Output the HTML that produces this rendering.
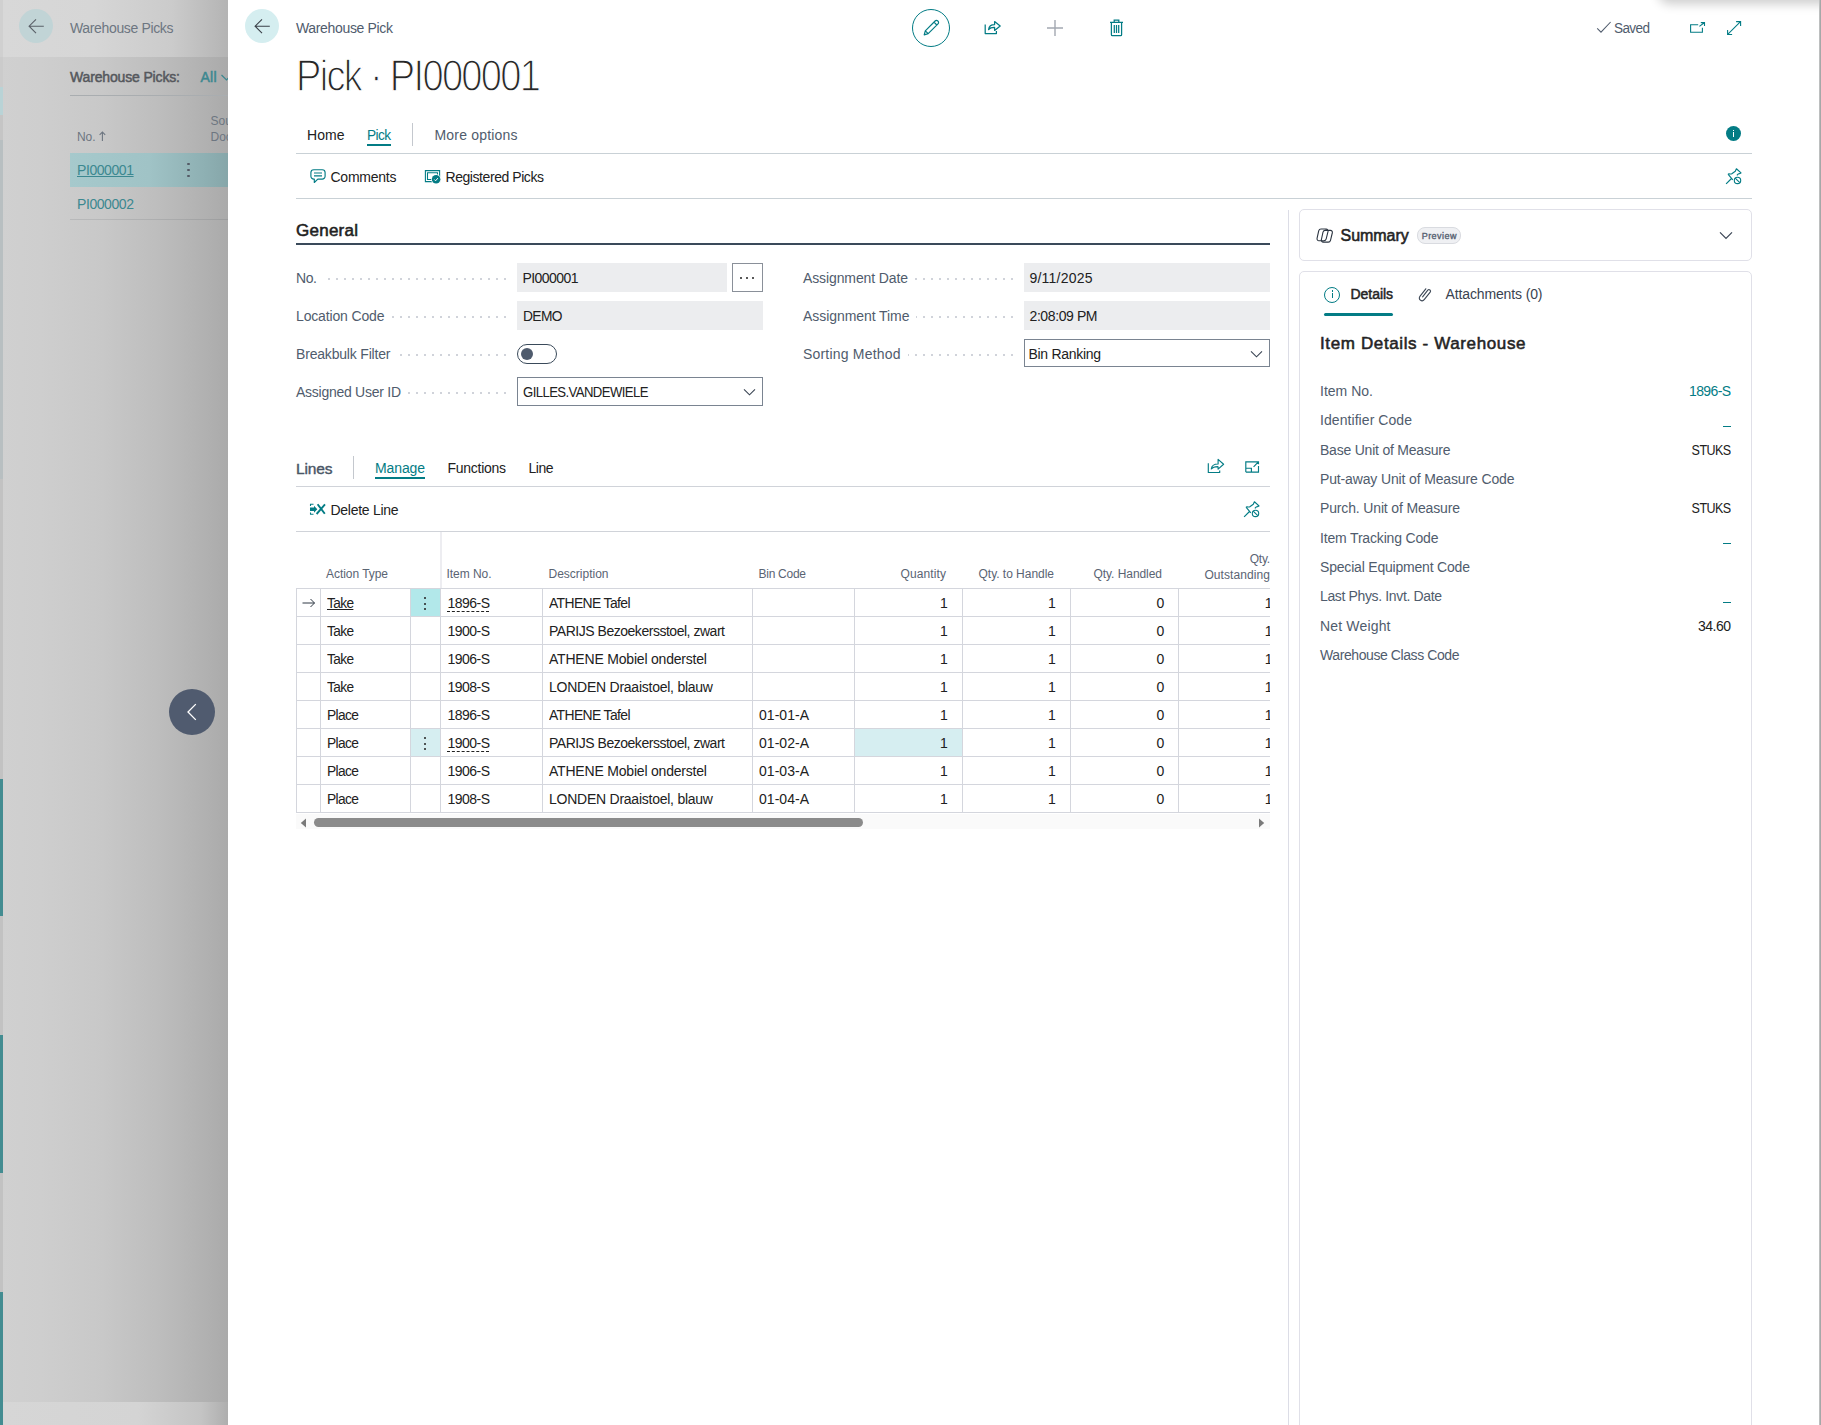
<!DOCTYPE html>
<html lang="en"><head><meta charset="utf-8"><title>Pick - PI000001 - Warehouse Pick</title>
<style>
html,body{margin:0;padding:0}
body{position:relative;width:1821px;height:1425px;overflow:hidden;background:#fff;font-family:"Liberation Sans", sans-serif;font-size:14px;color:#212121}
body div,body svg,.t{position:absolute;box-sizing:content-box}
.t{white-space:nowrap}
svg{overflow:visible}
.title{font-weight:400;-webkit-text-stroke:1.3px #fff}
</style></head>
<body>
<!-- dimmed Warehouse Picks list page behind the card -->
<div style="left:0px;top:0px;width:228px;height:1425px;background:linear-gradient(90deg,#d0d0d0 0%,#cecece 18%,#c8c8c8 45%,#bdbdbd 70%,#b1b1b1 90%,#aaaaaa 100%)"></div>
<div style="left:3px;top:0px;width:225px;height:57px;background:linear-gradient(90deg,#d8d8d8 0%,#d6d6d6 40%,#cbcbcb 75%,#b4b4b4 100%)"></div>
<div style="left:3px;top:1402px;width:225px;height:23px;background:linear-gradient(90deg,#d6d6d6 0%,#d4d4d4 60%,#c4c4c4 88%,#aeaeae 100%)"></div>
<div style="left:0px;top:0px;width:2.7px;height:57px;background:#d0d0d0"></div>
<div style="left:0px;top:57px;width:2.7px;height:30px;background:#cbcbcb"></div>
<div style="left:0px;top:87px;width:2.7px;height:28px;background:#b9d3d6"></div>
<div style="left:0px;top:115px;width:2.7px;height:25px;background:#c5c5c5"></div>
<div style="left:0px;top:140px;width:2.7px;height:339px;background:#b8bfc1"></div>
<div style="left:0px;top:479px;width:2.7px;height:300px;background:#c2c2c2"></div>
<div style="left:0px;top:779px;width:2.7px;height:137px;background:#438c91"></div>
<div style="left:0px;top:916px;width:2.7px;height:119px;background:#c2c2c2"></div>
<div style="left:0px;top:1035px;width:2.7px;height:138px;background:#438c91"></div>
<div style="left:0px;top:1173px;width:2.7px;height:119px;background:#c2c2c2"></div>
<div style="left:0px;top:1292px;width:2.7px;height:133px;background:#438c91"></div>
<div style="left:19px;top:9px;width:34px;height:34px;border-radius:50%;background:#c1d4d6"></div>
<svg style="left:27px;top:17px" width="18" height="18" viewBox="0 0 18 18" fill="none" ><path d="M16.800 9.200H2.200 M9 2.300L2.100 9.200l6.900 6.900" stroke="#5a6068" stroke-width="1.100"/></svg>
<span class="t" style="top:14px;font-size:14px;line-height:28px;left:70px;color:#6d7681;letter-spacing:-0.352px;">Warehouse Picks</span>
<span class="t" style="top:63px;font-size:14px;line-height:28px;left:70px;color:#55585d;letter-spacing:-0.154px;-webkit-text-stroke:0.5px #55585d;">Warehouse Picks:</span>
<span class="t" style="top:63px;font-size:14px;line-height:28px;left:200.5px;color:#3c8890;letter-spacing:0.219px;-webkit-text-stroke:0.5px #3c8890;">All</span>
<svg style="left:220px;top:71px" width="8" height="12" viewBox="0 0 8 12" fill="none" ><path d="M1.5 4l5 5 5-5" stroke="#3c8890" stroke-width="1.2"/></svg>
<div style="left:70px;top:95px;width:158px;height:1px;background:#a9adb0"></div>
<span class="t" style="top:124.5px;font-size:12px;line-height:24px;left:77px;color:#6d7681;letter-spacing:-0.094px;">No.</span>
<svg style="left:99px;top:131px" width="7" height="10" viewBox="0 0 7 10" fill="none" ><path d="M3.400 10V1 M.600 3.800L3.400 1l2.800 2.800" stroke="#6d7681" stroke-width="1.100"/></svg>
<div style="left:210.5px;top:113px;width:17.5px;height:34px;overflow:hidden"><span class="t" style="left:0;top:0;font-size:12px;line-height:16px;color:#6d7681">Sou</span><span class="t" style="left:0;top:16px;font-size:12px;line-height:16px;color:#6d7681">Doc</span></div>
<div style="left:70px;top:152.5px;width:158px;height:34px;background:linear-gradient(90deg,#a6c9cc 0%,#a0c3c6 50%,#8eb0b3 85%,#86a6a9 100%)"></div>
<span class="t" style="top:156px;font-size:14px;line-height:28px;left:77px;color:#3c8890;letter-spacing:-0.422px;text-decoration:underline;">PI000001</span>
<div style="left:187.2px;top:162.8px;width:2.7px;height:2.7px;border-radius:35%;background:#545b66"></div>
<div style="left:187.2px;top:168.6px;width:2.7px;height:2.7px;border-radius:35%;background:#545b66"></div>
<div style="left:187.2px;top:174.8px;width:2.7px;height:2.7px;border-radius:35%;background:#545b66"></div>
<span class="t" style="top:190px;font-size:14px;line-height:28px;left:77px;color:#3c8890;letter-spacing:-0.422px;">PI000002</span>
<div style="left:70px;top:219px;width:158px;height:1px;background:rgba(60,70,80,.13)"></div>
<div style="left:169px;top:689px;width:46px;height:46px;border-radius:50%;background:#505b6f"></div>
<svg style="left:184px;top:702px" width="16" height="20" viewBox="0 0 16 20" fill="none" ><path d="M11.800 2.100L4 10l7.800 7.900" stroke="#fff" stroke-width="1.350"/></svg>
<!-- Warehouse Pick card -->
<div style="left:228px;top:0px;width:1593px;height:1425px;background:#fff"></div>
<div style="left:1658px;top:-30px;width:200px;height:30px;border-radius:12px;box-shadow:0 4px 11px rgba(0,0,0,.2)"></div>
<div style="left:1819px;top:0px;width:2px;height:1425px;background:linear-gradient(90deg,#c8caca,#9a9d9d)"></div>
<div style="left:245px;top:9px;width:34px;height:34px;border-radius:50%;background:#d5eef0"></div>
<svg style="left:253px;top:17px" width="18" height="18" viewBox="0 0 18 18" fill="none" ><path d="M16.800 9.200H2.200 M9 2.300L2.100 9.200l6.900 6.900" stroke="#3a4048" stroke-width="1.100"/></svg>
<span class="t" style="top:14.4px;font-size:14px;line-height:28px;left:296px;color:#505c6d;letter-spacing:-0.340px;">Warehouse Pick</span>
<span class="t title" style="top:32.5px;font-size:43.5px;line-height:87px;left:296px;color:#262626;transform:scaleX(0.8760);transform-origin:left center;letter-spacing:-1.958px;">Pick · PI000001</span>
<div style="left:912px;top:9px;width:36px;height:36px;border-radius:50%;border:1.3px solid #037c85"></div>
<svg style="left:921px;top:18px" width="20" height="20" viewBox="0 0 20 20" fill="none" ><path d="M3.2 16.8l1.1-4L14.1 3a1.9 1.9 0 0 1 2.7 0l.2.2a1.9 1.9 0 0 1 0 2.7L7.2 15.7z M4.3 12.8l2.9 2.9 M13 4.2l2.8 2.8" stroke="#037c85" stroke-width="1.2" stroke-linejoin="round"/></svg>
<svg style="left:984px;top:19px" width="18" height="16" viewBox="0 0 18 16" fill="none" ><path d="M1.2 5.5V14.5H12.4V12 M4.6 10.5C5 7.2 7.3 5.6 10.6 5.6V2.6L16.2 7l-5.6 4.4V8.4C8 8.3 6 8.8 4.6 10.5z" stroke="#037c85" stroke-width="1.25" stroke-linejoin="round"/></svg>
<svg style="left:1046px;top:19px" width="18" height="18" viewBox="0 0 18 18" fill="none" ><path d="M9 1v16M1 9h16" stroke="#a3a8b1" stroke-width="1.4"/></svg>
<svg style="left:1109px;top:19px" width="15" height="18" viewBox="0 0 15 18" fill="none" ><path d="M1 3.3h13 M5.2 3.2V1.2h4.6v2 M2.4 3.4v12.3a1 1 0 0 0 1 1h8.2a1 1 0 0 0 1-1V3.4 M5.3 6v8 M7.5 6v8 M9.7 6v8" stroke="#037c85" stroke-width="1.25"/></svg>
<svg style="left:1596px;top:20px" width="16" height="14" viewBox="0 0 16 14" fill="none" ><path d="M1.200 8.400L5 12.200 14.600 2" stroke="#505c6d" stroke-width="1.050"/></svg>
<span class="t" style="top:14px;font-size:14px;line-height:28px;left:1613.5px;color:#505c6d;transform:scaleX(0.9682);transform-origin:left center;letter-spacing:-0.630px;">Saved</span>
<svg style="left:1689px;top:21px" width="17" height="13" viewBox="0 0 17 13" fill="none" ><path d="M9.200 3.700H1.600V11.300H13.400V6.800 M10.400 5.400L15.300 1.800 M11.800 1.600H15.500V4.900" stroke="#037c85" stroke-width="1.100"/></svg>
<svg style="left:1726px;top:20px" width="16" height="16" viewBox="0 0 16 16" fill="none" ><path d="M1.700 14.400L14.500 1.700 M10.100 1.600H14.600V6.100 M1.600 9.900V14.500H6.100" stroke="#037c85" stroke-width="1.100"/></svg>
<span class="t" style="top:121px;font-size:14px;line-height:28px;left:307px;letter-spacing:0.047px;">Home</span>
<span class="t" style="top:121px;font-size:14px;line-height:28px;left:367px;color:#037c85;transform:scaleX(0.9771);transform-origin:left center;letter-spacing:-0.630px;">Pick</span>
<div style="left:367px;top:143.5px;width:24px;height:2px;background:#037c85"></div>
<div style="left:412px;top:123px;width:1px;height:23px;background:#c4c8ce"></div>
<span class="t" style="top:121px;font-size:14px;line-height:28px;left:434.5px;color:#505c6d;letter-spacing:0.188px;">More options</span>
<div style="left:1726px;top:126px;width:15px;height:15px;border-radius:50%;background:#037c85"></div>
<div style="left:1733px;top:129.5px;width:1.4px;height:1.6px;background:#fff"></div>
<div style="left:1733px;top:132.2px;width:1.4px;height:5.2px;background:#fff"></div>
<div style="left:296px;top:153px;width:1456px;height:1px;background:#c9d1d6"></div>
<svg style="left:310px;top:169px" width="16" height="16" viewBox="0 0 16 16" fill="none" ><path d="M3.800 .700h8.400a2.900 2.900 0 0 1 2.900 2.900v3.600a2.900 2.900 0 0 1-2.900 2.900H7.800L4.300 13.500V10.100H3.800A2.900 2.900 0 0 1 .900 7.200V3.600A2.900 2.900 0 0 1 3.800 .700z M4 4h8 M4 6.800h8" stroke="#037c85" stroke-width="1.150" stroke-linejoin="round"/></svg>
<span class="t" style="top:163px;font-size:14px;line-height:28px;left:330.5px;letter-spacing:-0.241px;">Comments</span>
<svg style="left:424px;top:169px" width="17" height="16" viewBox="0 0 17 16" fill="none" ><path d="M1.400 1.600H15.600V12.600H1.400z M3.500 3.700H13.500V10.500H3.500z" stroke="#037c85" stroke-width="1.100"/><circle cx="12.100" cy="10.300" r="5" fill="#fff"/><circle cx="12.100" cy="10.300" r="4.300" fill="#037c85"/><path d="M10.300 10.500l1.300 1.300 2.300-2.700" stroke="#fff" stroke-width="1"/></svg>
<span class="t" style="top:163px;font-size:14px;line-height:28px;left:445.5px;letter-spacing:-0.436px;">Registered Picks</span>
<svg style="left:1725px;top:168px" width="18" height="17" viewBox="0 0 18 17" fill="none" ><path d="M1.100 15.900L6.500 10.500 M3 6.100L7.800 11.800 M3 6.100C4.400 5.600 5.800 6.300 6.800 5.800L10.300 3.200L11.400 .800L16 4.900L14.400 5.600C13.400 5.600 12.600 6.400 11.900 7.300" stroke="#037c85" stroke-width="1.150" stroke-linejoin="round"/><circle cx="12.500" cy="12.400" r="3.200" stroke="#037c85" stroke-width="1.100"/><path d="M10.200 10.100l4.600 4.600" stroke="#037c85" stroke-width="1.100"/></svg>
<div style="left:296px;top:198px;width:1456px;height:1px;background:#c9d1d6"></div>
<!-- General -->
<span class="t" style="top:214px;font-size:17px;line-height:34px;left:296px;letter-spacing:0.253px;-webkit-text-stroke:0.55px #212121;">General</span>
<div style="left:296px;top:243px;width:974px;height:2px;background:#3a4a5a"></div>
<span class="t" style="top:264px;font-size:14px;line-height:28px;left:296px;color:#505c6d;letter-spacing:-0.398px;">No.</span>
<div style="left:324px;top:278px;width:182px;height:2px;background:linear-gradient(90deg,#d0d3da 2px,transparent 2px) 4px 0/8px 2px repeat-x"></div>
<div style="left:517px;top:263px;width:210px;height:29px;background:#ecedef"></div><span class="t" style="top:264px;font-size:14px;line-height:28px;left:522.5px;letter-spacing:-0.565px;">PI000001</span>
<div style="left:732px;top:263px;width:29px;height:27px;border:1px solid #8a9099;background:#fff"></div>
<div style="left:739.8px;top:277px;width:2px;height:2px;background:#212121;border-radius:50%"></div>
<div style="left:746px;top:277px;width:2px;height:2px;background:#212121;border-radius:50%"></div>
<div style="left:752.2px;top:277px;width:2px;height:2px;background:#212121;border-radius:50%"></div>
<span class="t" style="top:302px;font-size:14px;line-height:28px;left:296px;color:#505c6d;letter-spacing:-0.150px;">Location Code</span>
<div style="left:392px;top:316px;width:114px;height:2px;background:linear-gradient(90deg,#d0d3da 2px,transparent 2px) 0px 0/8px 2px repeat-x"></div>
<div style="left:517px;top:301px;width:246px;height:29px;background:#ecedef"></div><span class="t" style="top:302px;font-size:14px;line-height:28px;left:522.5px;transform:scaleX(0.9848);transform-origin:left center;letter-spacing:-0.630px;">DEMO</span>
<span class="t" style="top:340px;font-size:14px;line-height:28px;left:296px;color:#505c6d;letter-spacing:-0.184px;">Breakbulk Filter</span>
<div style="left:398px;top:354px;width:108px;height:2px;background:linear-gradient(90deg,#d0d3da 2px,transparent 2px) 2px 0/8px 2px repeat-x"></div>
<div style="left:517px;top:344px;width:38px;height:18px;border:1px solid #3a4a5a;border-radius:10px;background:#fff"></div>
<div style="left:521px;top:348px;width:12px;height:12px;border-radius:50%;background:#4f5b6d"></div>
<span class="t" style="top:378px;font-size:14px;line-height:28px;left:296px;color:#505c6d;letter-spacing:-0.263px;">Assigned User ID</span>
<div style="left:408px;top:392px;width:98px;height:2px;background:linear-gradient(90deg,#d0d3da 2px,transparent 2px) 0px 0/8px 2px repeat-x"></div>
<div style="left:517px;top:377px;width:244px;height:27px;border:1px solid #7a8491;background:#fff"></div>
<span class="t" style="top:378px;font-size:14px;line-height:28px;left:522.5px;transform:scaleX(0.9393);transform-origin:left center;letter-spacing:-0.630px;">GILLES.VANDEWIELE</span>
<svg style="left:742.5px;top:388px" width="13" height="8" viewBox="0 0 13 8" fill="none" ><path d="M1 1.300l5.500 5.500 5.500-5.500" stroke="#3a4554" stroke-width="1.100"/></svg>
<span class="t" style="top:264px;font-size:14px;line-height:28px;left:803px;color:#505c6d;letter-spacing:-0.115px;">Assignment Date</span>
<div style="left:915px;top:278px;width:98px;height:2px;background:linear-gradient(90deg,#d0d3da 2px,transparent 2px) 0px 0/8px 2px repeat-x"></div>
<div style="left:1024px;top:263px;width:246px;height:29px;background:#ecedef"></div><span class="t" style="top:264px;font-size:14px;line-height:28px;left:1029.5px;letter-spacing:0.219px;">9/11/2025</span>
<span class="t" style="top:302px;font-size:14px;line-height:28px;left:803px;color:#505c6d;letter-spacing:-0.062px;">Assignment Time</span>
<div style="left:916px;top:316px;width:97px;height:2px;background:linear-gradient(90deg,#d0d3da 2px,transparent 2px) 7px 0/8px 2px repeat-x"></div>
<div style="left:1024px;top:301px;width:246px;height:29px;background:#ecedef"></div><span class="t" style="top:302px;font-size:14px;line-height:28px;left:1029.5px;letter-spacing:-0.401px;">2:08:09 PM</span>
<span class="t" style="top:340px;font-size:14px;line-height:28px;left:803px;color:#505c6d;letter-spacing:0.196px;">Sorting Method</span>
<div style="left:908px;top:354px;width:105px;height:2px;background:linear-gradient(90deg,#d0d3da 2px,transparent 2px) 7px 0/8px 2px repeat-x"></div>
<div style="left:1024px;top:339px;width:244px;height:26px;border:1px solid #7a8491;background:#fff"></div>
<span class="t" style="top:340px;font-size:14px;line-height:28px;left:1028.5px;letter-spacing:-0.300px;">Bin Ranking</span>
<svg style="left:1250px;top:350px" width="13" height="8" viewBox="0 0 13 8" fill="none" ><path d="M1 1.300l5.500 5.500 5.500-5.500" stroke="#3a4554" stroke-width="1.100"/></svg>
<!-- Lines -->
<span class="t" style="top:452.5px;font-size:15.5px;line-height:31px;left:296px;color:#4a5666;letter-spacing:-0.141px;-webkit-text-stroke:0.400px #4a5666;">Lines</span>
<div style="left:353px;top:456px;width:1px;height:23px;background:#c4c8ce"></div>
<span class="t" style="top:454px;font-size:14px;line-height:28px;left:375px;color:#037c85;letter-spacing:-0.119px;">Manage</span>
<div style="left:375px;top:476.5px;width:50px;height:2px;background:#037c85"></div>
<span class="t" style="top:454px;font-size:14px;line-height:28px;left:447.5px;letter-spacing:-0.275px;">Functions</span>
<span class="t" style="top:454px;font-size:14px;line-height:28px;left:528.5px;letter-spacing:-0.490px;">Line</span>
<svg style="left:1207px;top:458px" width="18" height="16" viewBox="0 0 18 16" fill="none" ><path d="M1.300 5.200V14.500H12.700V12.400 M4.300 11C4.700 7.600 7 6 11.100 6V1.400L16.600 6.300 11.100 11.100V8.700C8 8.600 5.800 9.200 4.300 11z" stroke="#037c85" stroke-width="1.150" stroke-linejoin="round"/></svg>
<svg style="left:1244px;top:459px" width="17" height="15" viewBox="0 0 17 15" fill="none" ><path d="M1.800 13.100V2.800H14.500V5.300 M14.500 7V13.100H1.800 M9.600 7.800L14.100 3.200 M1.800 9.200H7.400V13.100" stroke="#037c85" stroke-width="1.150"/></svg>
<div style="left:296px;top:486px;width:974px;height:1px;background:#d0d3d9"></div>
<svg style="left:309px;top:502px" width="17" height="15" viewBox="0 0 17 15" fill="none" ><path d="M1 2.300H4.500 M1 12.300H4.500 M1.500 2.300V4 M1.500 10.600V12.300" stroke="#037c85" stroke-width="1.100"/><path d="M1 5.600H5V3.800L8.300 7.300 5 10.800V9H1z" fill="#037c85"/><path d="M8.600 2.200l7.200 9.600 M16 2.400l-8.400 9.600" stroke="#037c85" stroke-width="1.900"/></svg>
<span class="t" style="top:496px;font-size:14px;line-height:28px;left:330.5px;letter-spacing:-0.283px;">Delete Line</span>
<svg style="left:1243.2px;top:501.3px" width="18" height="17" viewBox="0 0 18 17" fill="none" ><path d="M1.100 15.900L6.500 10.500 M3 6.100L7.800 11.800 M3 6.100C4.400 5.600 5.800 6.300 6.800 5.800L10.300 3.200L11.400 .800L16 4.900L14.400 5.600C13.400 5.600 12.600 6.400 11.900 7.300" stroke="#037c85" stroke-width="1.150" stroke-linejoin="round"/><circle cx="12.500" cy="12.400" r="3.200" stroke="#037c85" stroke-width="1.100"/><path d="M10.200 10.100l4.600 4.600" stroke="#037c85" stroke-width="1.100"/></svg>
<div style="left:296px;top:531px;width:974px;height:1px;background:#d0d3d9"></div>
<div style="left:440px;top:532px;width:1.5px;height:56px;background:#ededf1"></div>
<span class="t" style="top:561.5px;font-size:12px;line-height:24px;left:326px;color:#5a6473;letter-spacing:-0.048px;">Action Type</span>
<span class="t" style="top:561.5px;font-size:12px;line-height:24px;left:446.5px;color:#5a6473;letter-spacing:-0.051px;">Item No.</span>
<span class="t" style="top:561.5px;font-size:12px;line-height:24px;left:548.5px;color:#5a6473;letter-spacing:-0.003px;">Description</span>
<span class="t" style="top:561.5px;font-size:12px;line-height:24px;left:758.5px;color:#5a6473;letter-spacing:-0.268px;">Bin Code</span>
<span class="t" style="top:561.5px;font-size:12px;line-height:24px;right:874.886px;color:#5a6473;letter-spacing:0.114px;">Quantity</span>
<span class="t" style="top:561.5px;font-size:12px;line-height:24px;right:767.025px;color:#5a6473;letter-spacing:-0.025px;">Qty. to Handle</span>
<span class="t" style="top:561.5px;font-size:12px;line-height:24px;right:659.06px;color:#5a6473;letter-spacing:-0.060px;">Qty. Handled</span>
<div style="left:1179px;top:545px;width:91px;height:40px;overflow:hidden"><span class="t" style="right:0;top:6px;font-size:12px;line-height:16px;color:#5a6473;letter-spacing:-0.200px">Qty.</span><span class="t" style="right:0;top:21.500px;font-size:12px;line-height:16px;color:#5a6473;letter-spacing:0.080px">Outstanding</span></div>
<div style="left:411px;top:589px;width:29px;height:27px;background:#b2e8ea"></div>
<div style="left:411px;top:729px;width:29px;height:27px;background:#d6eef1"></div>
<div style="left:855px;top:729px;width:107px;height:27px;background:#d6eef1"></div>
<div style="left:296px;top:588px;width:974px;height:1px;background:#d4d6dd"></div>
<div style="left:296px;top:616px;width:974px;height:1px;background:#d4d6dd"></div>
<div style="left:296px;top:644px;width:974px;height:1px;background:#d4d6dd"></div>
<div style="left:296px;top:672px;width:974px;height:1px;background:#d4d6dd"></div>
<div style="left:296px;top:700px;width:974px;height:1px;background:#d4d6dd"></div>
<div style="left:296px;top:728px;width:974px;height:1px;background:#d4d6dd"></div>
<div style="left:296px;top:756px;width:974px;height:1px;background:#d4d6dd"></div>
<div style="left:296px;top:784px;width:974px;height:1px;background:#d4d6dd"></div>
<div style="left:296px;top:812px;width:974px;height:1px;background:#d4d6dd"></div>
<div style="left:296px;top:588px;width:1px;height:224px;background:#d4d6dd"></div>
<div style="left:320px;top:588px;width:1px;height:224px;background:#d4d6dd"></div>
<div style="left:410px;top:588px;width:1px;height:224px;background:#d4d6dd"></div>
<div style="left:440px;top:588px;width:1px;height:224px;background:#d4d6dd"></div>
<div style="left:542px;top:588px;width:1px;height:224px;background:#d4d6dd"></div>
<div style="left:752px;top:588px;width:1px;height:224px;background:#d4d6dd"></div>
<div style="left:854px;top:588px;width:1px;height:224px;background:#d4d6dd"></div>
<div style="left:962px;top:588px;width:1px;height:224px;background:#d4d6dd"></div>
<div style="left:1070px;top:588px;width:1px;height:224px;background:#d4d6dd"></div>
<div style="left:1178px;top:588px;width:1px;height:224px;background:#d4d6dd"></div>
<svg style="left:302px;top:598px" width="14" height="10" viewBox="0 0 14 10" fill="none" ><path d="M.500 5H12.500 M8.500 1l4 4-4 4" stroke="#2f3844" stroke-width="1"/></svg>
<span class="t" style="top:589px;font-size:14px;line-height:28px;left:327px;transform:scaleX(0.9751);transform-origin:left center;letter-spacing:-0.630px;text-decoration:underline;">Take</span>
<div style="left:424px;top:596.7px;width:2px;height:2px;background:#212121;border-radius:50%"></div>
<div style="left:424px;top:602.5px;width:2px;height:2px;background:#212121;border-radius:50%"></div>
<div style="left:424px;top:608.3px;width:2px;height:2px;background:#212121;border-radius:50%"></div>
<span class="t" style="top:589px;font-size:14px;line-height:28px;left:447.5px;letter-spacing:-0.531px;text-decoration:underline dashed;text-decoration-thickness:1px;text-underline-offset:3px;">1896-S</span>
<span class="t" style="top:589px;font-size:14px;line-height:28px;left:549px;transform:scaleX(0.9934);transform-origin:left center;letter-spacing:-0.630px;">ATHENE Tafel</span>
<span class="t" style="top:589px;font-size:14px;line-height:28px;right:873.2px;">1</span>
<span class="t" style="top:589px;font-size:14px;line-height:28px;right:765.2px;">1</span>
<span class="t" style="top:589px;font-size:14px;line-height:28px;right:656.8px;">0</span>
<div style="left:1240px;top:589px;width:30px;height:28px;overflow:hidden"><span class="t" style="right:-2.600px;top:0;font-size:14px;line-height:28px">1</span></div>
<span class="t" style="top:617px;font-size:14px;line-height:28px;left:327px;transform:scaleX(0.9751);transform-origin:left center;letter-spacing:-0.630px;">Take</span>
<span class="t" style="top:617px;font-size:14px;line-height:28px;left:447.5px;letter-spacing:-0.531px;">1900-S</span>
<span class="t" style="top:617px;font-size:14px;line-height:28px;left:549px;letter-spacing:-0.475px;">PARIJS Bezoekersstoel, zwart</span>
<span class="t" style="top:617px;font-size:14px;line-height:28px;right:873.2px;">1</span>
<span class="t" style="top:617px;font-size:14px;line-height:28px;right:765.2px;">1</span>
<span class="t" style="top:617px;font-size:14px;line-height:28px;right:656.8px;">0</span>
<div style="left:1240px;top:617px;width:30px;height:28px;overflow:hidden"><span class="t" style="right:-2.600px;top:0;font-size:14px;line-height:28px">1</span></div>
<span class="t" style="top:645px;font-size:14px;line-height:28px;left:327px;transform:scaleX(0.9751);transform-origin:left center;letter-spacing:-0.630px;">Take</span>
<span class="t" style="top:645px;font-size:14px;line-height:28px;left:447.5px;letter-spacing:-0.531px;">1906-S</span>
<span class="t" style="top:645px;font-size:14px;line-height:28px;left:549px;letter-spacing:-0.199px;">ATHENE Mobiel onderstel</span>
<span class="t" style="top:645px;font-size:14px;line-height:28px;right:873.2px;">1</span>
<span class="t" style="top:645px;font-size:14px;line-height:28px;right:765.2px;">1</span>
<span class="t" style="top:645px;font-size:14px;line-height:28px;right:656.8px;">0</span>
<div style="left:1240px;top:645px;width:30px;height:28px;overflow:hidden"><span class="t" style="right:-2.600px;top:0;font-size:14px;line-height:28px">1</span></div>
<span class="t" style="top:673px;font-size:14px;line-height:28px;left:327px;transform:scaleX(0.9751);transform-origin:left center;letter-spacing:-0.630px;">Take</span>
<span class="t" style="top:673px;font-size:14px;line-height:28px;left:447.5px;letter-spacing:-0.531px;">1908-S</span>
<span class="t" style="top:673px;font-size:14px;line-height:28px;left:549px;letter-spacing:-0.245px;">LONDEN Draaistoel, blauw</span>
<span class="t" style="top:673px;font-size:14px;line-height:28px;right:873.2px;">1</span>
<span class="t" style="top:673px;font-size:14px;line-height:28px;right:765.2px;">1</span>
<span class="t" style="top:673px;font-size:14px;line-height:28px;right:656.8px;">0</span>
<div style="left:1240px;top:673px;width:30px;height:28px;overflow:hidden"><span class="t" style="right:-2.600px;top:0;font-size:14px;line-height:28px">1</span></div>
<span class="t" style="top:701px;font-size:14px;line-height:28px;left:327px;transform:scaleX(0.9843);transform-origin:left center;letter-spacing:-0.630px;">Place</span>
<span class="t" style="top:701px;font-size:14px;line-height:28px;left:447.5px;letter-spacing:-0.531px;">1896-S</span>
<span class="t" style="top:701px;font-size:14px;line-height:28px;left:549px;transform:scaleX(0.9934);transform-origin:left center;letter-spacing:-0.630px;">ATHENE Tafel</span>
<span class="t" style="top:701px;font-size:14px;line-height:28px;left:759px;letter-spacing:0.031px;">01-01-A</span>
<span class="t" style="top:701px;font-size:14px;line-height:28px;right:873.2px;">1</span>
<span class="t" style="top:701px;font-size:14px;line-height:28px;right:765.2px;">1</span>
<span class="t" style="top:701px;font-size:14px;line-height:28px;right:656.8px;">0</span>
<div style="left:1240px;top:701px;width:30px;height:28px;overflow:hidden"><span class="t" style="right:-2.600px;top:0;font-size:14px;line-height:28px">1</span></div>
<span class="t" style="top:729px;font-size:14px;line-height:28px;left:327px;transform:scaleX(0.9843);transform-origin:left center;letter-spacing:-0.630px;">Place</span>
<div style="left:424px;top:736.7px;width:2px;height:2px;background:#212121;border-radius:50%"></div>
<div style="left:424px;top:742.5px;width:2px;height:2px;background:#212121;border-radius:50%"></div>
<div style="left:424px;top:748.3px;width:2px;height:2px;background:#212121;border-radius:50%"></div>
<span class="t" style="top:729px;font-size:14px;line-height:28px;left:447.5px;letter-spacing:-0.531px;text-decoration:underline dashed;text-decoration-thickness:1px;text-underline-offset:3px;">1900-S</span>
<span class="t" style="top:729px;font-size:14px;line-height:28px;left:549px;letter-spacing:-0.475px;">PARIJS Bezoekersstoel, zwart</span>
<span class="t" style="top:729px;font-size:14px;line-height:28px;left:759px;letter-spacing:0.031px;">01-02-A</span>
<span class="t" style="top:729px;font-size:14px;line-height:28px;right:873.2px;">1</span>
<span class="t" style="top:729px;font-size:14px;line-height:28px;right:765.2px;">1</span>
<span class="t" style="top:729px;font-size:14px;line-height:28px;right:656.8px;">0</span>
<div style="left:1240px;top:729px;width:30px;height:28px;overflow:hidden"><span class="t" style="right:-2.600px;top:0;font-size:14px;line-height:28px">1</span></div>
<span class="t" style="top:757px;font-size:14px;line-height:28px;left:327px;transform:scaleX(0.9843);transform-origin:left center;letter-spacing:-0.630px;">Place</span>
<span class="t" style="top:757px;font-size:14px;line-height:28px;left:447.5px;letter-spacing:-0.531px;">1906-S</span>
<span class="t" style="top:757px;font-size:14px;line-height:28px;left:549px;letter-spacing:-0.199px;">ATHENE Mobiel onderstel</span>
<span class="t" style="top:757px;font-size:14px;line-height:28px;left:759px;letter-spacing:0.031px;">01-03-A</span>
<span class="t" style="top:757px;font-size:14px;line-height:28px;right:873.2px;">1</span>
<span class="t" style="top:757px;font-size:14px;line-height:28px;right:765.2px;">1</span>
<span class="t" style="top:757px;font-size:14px;line-height:28px;right:656.8px;">0</span>
<div style="left:1240px;top:757px;width:30px;height:28px;overflow:hidden"><span class="t" style="right:-2.600px;top:0;font-size:14px;line-height:28px">1</span></div>
<span class="t" style="top:785px;font-size:14px;line-height:28px;left:327px;transform:scaleX(0.9843);transform-origin:left center;letter-spacing:-0.630px;">Place</span>
<span class="t" style="top:785px;font-size:14px;line-height:28px;left:447.5px;letter-spacing:-0.531px;">1908-S</span>
<span class="t" style="top:785px;font-size:14px;line-height:28px;left:549px;letter-spacing:-0.245px;">LONDEN Draaistoel, blauw</span>
<span class="t" style="top:785px;font-size:14px;line-height:28px;left:759px;letter-spacing:0.031px;">01-04-A</span>
<span class="t" style="top:785px;font-size:14px;line-height:28px;right:873.2px;">1</span>
<span class="t" style="top:785px;font-size:14px;line-height:28px;right:765.2px;">1</span>
<span class="t" style="top:785px;font-size:14px;line-height:28px;right:656.8px;">0</span>
<div style="left:1240px;top:785px;width:30px;height:28px;overflow:hidden"><span class="t" style="right:-2.600px;top:0;font-size:14px;line-height:28px">1</span></div>
<div style="left:296px;top:814px;width:974px;height:15px;background:#fafafa"></div>
<div style="left:314px;top:818px;width:549px;height:9px;background:#8b8b8b;border-radius:4.500px"></div>
<svg style="left:300px;top:817px" width="7" height="11" viewBox="0 0 7 11" fill="none" ><path d="M6 1.600L.800 6l5.200 4.400z" fill="#7a7a7a"/></svg>
<svg style="left:1258px;top:817px" width="7" height="11" viewBox="0 0 7 11" fill="none" ><path d="M1 1.600l5.200 4.400-5.200 4.400z" fill="#7a7a7a"/></svg>
<!-- FactBox pane -->
<div style="left:1288px;top:210px;width:1px;height:1215px;background:#dcdde6"></div>
<div style="left:1299px;top:209px;width:451px;height:50px;border:1px solid #e0e0e8;border-radius:5px;background:#fff"></div>
<svg style="left:1315.5px;top:227.5px" width="17" height="15" viewBox="0 0 17 15" fill="none" ><path d="M5 1H10.200a1.900 1.900 0 0 1 1.850 2.350L10.200 10.900a2.400 2.400 0 0 1-2.300 1.800H2.900a1.900 1.900 0 0 1-1.850-2.350L2.700 2.800A2.400 2.400 0 0 1 5 1z M9.300 2.400H14.500a1.900 1.900 0 0 1 1.850 2.350L14.500 12.300a2.400 2.400 0 0 1-2.300 1.800H7.200a1.900 1.900 0 0 1-1.850-2.350L7 4.200A2.400 2.400 0 0 1 9.300 2.400z" stroke="#2b3440" stroke-width="1.100" stroke-linejoin="round"/></svg>
<span class="t" style="top:219.5px;font-size:16px;line-height:32px;left:1340.5px;color:#242424;letter-spacing:-0.026px;-webkit-text-stroke:0.55px #242424;">Summary</span>
<div style="left:1417px;top:227px;width:42px;height:14.5px;border:1px solid #d9dbe0;border-radius:8px;background:#eff0f3"></div>
<span class="t" style="top:226.7px;font-size:9px;line-height:18px;left:1421.7px;color:#566171;letter-spacing:0.447px;-webkit-text-stroke:0.35px #566171;">Preview</span>
<svg style="left:1718.5px;top:231px" width="14" height="9" viewBox="0 0 14 9" fill="none" ><path d="M1 1.300l6 6 6-6" stroke="#3a4554" stroke-width="1.200"/></svg>
<div style="left:1299px;top:271px;width:451px;height:1170px;border:1px solid #e0e0e8;border-radius:5px;background:#fff"></div>
<div style="left:1324px;top:286.5px;width:14px;height:14px;border:1.200px solid #037c85;border-radius:50%"></div>
<div style="left:1331.6px;top:290.3px;width:1.3px;height:1.5px;background:#037c85"></div>
<div style="left:1331.6px;top:292.8px;width:1.3px;height:5px;background:#037c85"></div>
<span class="t" style="top:280px;font-size:14px;line-height:28px;left:1350.5px;color:#242424;letter-spacing:-0.049px;-webkit-text-stroke:0.5px #242424;">Details</span>
<div style="left:1324px;top:313px;width:69px;height:3px;background:#037c85;border-radius:2px"></div>
<svg style="left:1418px;top:286px" width="15" height="17" viewBox="0 0 15 17" fill="none" ><path d="M4.600 10.800l5.200-6.600a1.500 1.500 0 0 1 2.400 1.900l-6 7.600a2.700 2.700 0 0 1-4.300-3.400L7.800 2.800" stroke="#3b4654" stroke-width="1.100" stroke-linecap="round"/></svg>
<span class="t" style="top:280px;font-size:14px;line-height:28px;left:1445.5px;color:#3a4350;letter-spacing:-0.131px;">Attachments (0)</span>
<span class="t" style="top:327px;font-size:17px;line-height:34px;left:1320px;color:#242424;letter-spacing:0.623px;-webkit-text-stroke:0.55px #242424;">Item Details - Warehouse</span>
<span class="t" style="top:377px;font-size:14px;line-height:28px;left:1320px;color:#505c6d;letter-spacing:0.013px;">Item No.</span>
<span class="t" style="top:377px;font-size:14px;line-height:28px;right:90.6299px;color:#037c85;transform:scaleX(0.9999);transform-origin:right center;letter-spacing:-0.630px;">1896-S</span>
<span class="t" style="top:406.35px;font-size:14px;line-height:28px;left:1320px;color:#505c6d;letter-spacing:0.067px;">Identifier Code</span>
<div style="left:1723px;top:426px;width:8px;height:1.2px;background:#037c85"></div>
<span class="t" style="top:435.7px;font-size:14px;line-height:28px;left:1320px;color:#505c6d;letter-spacing:-0.217px;">Base Unit of Measure</span>
<span class="t" style="top:435.7px;font-size:14px;line-height:28px;right:90.5634px;transform:scaleX(0.8943);transform-origin:right center;letter-spacing:-0.630px;">STUKS</span>
<span class="t" style="top:465.05px;font-size:14px;line-height:28px;left:1320px;color:#505c6d;letter-spacing:-0.141px;">Put-away Unit of Measure Code</span>
<span class="t" style="top:494.4px;font-size:14px;line-height:28px;left:1320px;color:#505c6d;letter-spacing:-0.151px;">Purch. Unit of Measure</span>
<span class="t" style="top:494.4px;font-size:14px;line-height:28px;right:90.5634px;transform:scaleX(0.8943);transform-origin:right center;letter-spacing:-0.630px;">STUKS</span>
<span class="t" style="top:523.75px;font-size:14px;line-height:28px;left:1320px;color:#505c6d;letter-spacing:-0.170px;">Item Tracking Code</span>
<div style="left:1723px;top:543px;width:8px;height:1.2px;background:#037c85"></div>
<span class="t" style="top:553.1px;font-size:14px;line-height:28px;left:1320px;color:#505c6d;letter-spacing:-0.196px;">Special Equipment Code</span>
<span class="t" style="top:582.45px;font-size:14px;line-height:28px;left:1320px;color:#505c6d;letter-spacing:-0.359px;">Last Phys. Invt. Date</span>
<div style="left:1723px;top:602px;width:8px;height:1.2px;background:#037c85"></div>
<span class="t" style="top:611.8px;font-size:14px;line-height:28px;left:1320px;color:#505c6d;letter-spacing:0.167px;">Net Weight</span>
<span class="t" style="top:611.8px;font-size:14px;line-height:28px;right:90.512px;letter-spacing:-0.512px;">34.60</span>
<span class="t" style="top:641.15px;font-size:14px;line-height:28px;left:1320px;color:#505c6d;letter-spacing:-0.412px;">Warehouse Class Code</span>
</body></html>
